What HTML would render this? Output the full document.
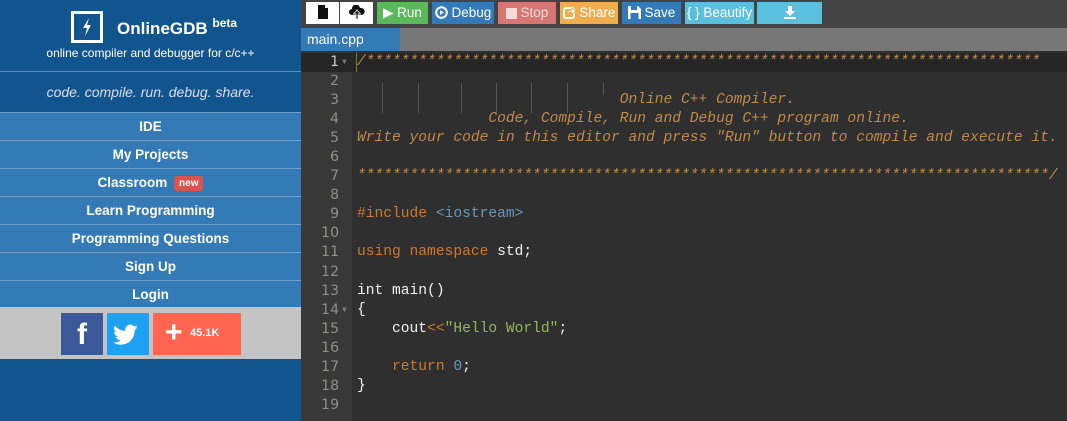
<!DOCTYPE html>
<html><head><meta charset="utf-8"><style>
*{margin:0;padding:0;box-sizing:border-box}
body{width:1067px;height:421px;overflow:hidden;background:#2f2f2f;font-family:"Liberation Sans",sans-serif;position:relative}
#side{position:absolute;left:0;top:0;width:301px;height:421px;background:#12558e}
.logo{position:absolute;left:71px;top:11px;width:32px;height:32px;border:3px solid #fff}
.title{position:absolute;left:117px;top:16px;color:#fff;font-weight:bold;font-size:17px}
.title sup{font-size:12px;vertical-align:7px}
.sub{position:absolute;left:0;width:301px;top:46px;text-align:center;color:#fff;font-size:12px}
.hr{position:absolute;left:0;top:71px;width:301px;height:1px;background:#5b8ab5}
.motto{position:absolute;left:0;width:301px;top:84px;text-align:center;color:#dde;font-size:14px;font-style:italic}
.menu{position:absolute;left:0;top:112px;width:301px}
.menu div{height:28px;line-height:27px;background:#337ab7;color:#fff;text-align:center;font-weight:bold;font-size:13.5px;border-top:1px solid #6a9bc9}
.new{display:inline-block;background:#d9534f;color:#fff;font-size:10px;border-radius:3px;padding:0 5px;line-height:15px;vertical-align:1px;margin-left:3px}
.social{position:absolute;left:0;top:307px;width:301px;height:52px;background:#c4c4c4}
.sb{position:absolute;top:6px;height:42px;color:#fff}
#tb{position:absolute;left:301px;top:0;width:766px;height:28px;background:#444}
.b{position:absolute;top:2px;height:22px;color:#fff;font-size:13.5px;line-height:22px;text-align:center;white-space:nowrap;overflow:hidden}
.b svg{vertical-align:-2px}
#tabs{position:absolute;left:301px;top:28px;width:766px;height:23px;background:#777}
#tab{position:absolute;left:0;top:0;width:99px;height:23px;background:#337ab7;color:#fff;font-size:14px;line-height:23px;padding-left:6px}
#gut{position:absolute;left:301px;top:52px;width:51px;height:369px;background:#383838}
#ed{position:absolute;left:301px;top:53px;width:766px;font-family:"Liberation Mono",monospace;font-size:14.6px}
.l{height:19.05px;line-height:19px;white-space:pre;position:relative}
.n{position:absolute;left:0;width:38px;text-align:right;color:#8f908a;font-family:"DejaVu Sans",sans-serif;font-size:14px}
.f{position:absolute;left:41px;top:0;color:#777;font-size:8px}
.c{position:absolute;left:56px;color:#f0f0f0}
.cm{color:#c08a4a;font-style:italic}
.kw{color:#cc7832}.st{color:#8fb85a}.nu{color:#6897bb}.inc{color:#6897bb}
.g{position:absolute;top:30px;height:30px;width:1px;background:#555}
</style></head><body>
<div id="side">
<div class="logo"><svg width="26" height="26" viewBox="0 0 26 26"><path d="M15 4 L9 14 H13 L11 22 L17 11 H13 Z" fill="#fff"/></svg></div>
<div class="title">OnlineGDB <sup>beta</sup></div>
<div class="sub">online compiler and debugger for c/c++</div>
<div class="hr"></div>
<div class="motto">code. compile. run. debug. share.</div>
<div class="menu">
<div>IDE</div><div>My Projects</div><div>Classroom <span class="new">new</span></div><div>Learn Programming</div><div>Programming Questions</div><div>Sign Up</div><div>Login</div>
</div>
<div class="social">
<div class="sb" style="left:61px;width:42px;background:#3b5998;font-size:30px;font-weight:bold;text-align:center;line-height:44px">f</div>
<div class="sb" style="left:107px;width:42px;background:#1da1f2"><svg width="42" height="42" viewBox="0 0 42 42"><path d="M31 14c-1 .4-2 .7-3 .8 1-.6 2-1.6 2.3-2.7-1 .6-2 1-3.3 1.2a5 5 0 0 0-8.6 4.6c-4.3-.2-8-2.2-10.6-5.3-1.5 2.5-.6 5.4 1.6 6.8-.8 0-1.6-.3-2.3-.6 0 2.4 1.7 4.5 4 5-.7.2-1.5.2-2.3.1.6 2 2.5 3.4 4.7 3.5-2 1.6-4.6 2.4-7.3 2.1 2.2 1.4 4.8 2.2 7.6 2.2 9.1 0 14.2-7.7 13.9-14.7 1-.7 1.8-1.6 2.4-2.5z" fill="#fff"/></svg></div>
<div class="sb" style="left:153px;width:88px;background:#ff6550"><span style="position:absolute;left:12px;top:4px;font-size:30px;font-weight:bold;line-height:32px">+</span><span style="position:absolute;left:37px;top:14px;font-size:11px;font-weight:bold">45.1K</span></div>
</div>
</div>
<div id="tb">
<div class="b" style="left:5px;width:33px;background:#fff"><svg width="12" height="14" viewBox="0 0 12 14"><path d="M1 0H8L11 3V14H1Z" fill="#111"/><path d="M8 0V3H11" fill="#fff"/></svg></div>
<div class="b" style="left:39px;width:33px;background:#fff"><svg width="16" height="14" viewBox="0 0 16 14"><path d="M4 10H3A3 3 0 0 1 3 4 4 4 0 0 1 11 3 3 3 0 0 1 13 10H12" fill="#111"/><path d="M8 5L4.5 9H7V14H9V9H11.5Z" fill="#111" stroke="#fff" stroke-width=".8"/></svg></div>
<div class="b" style="left:76px;width:51px;background:#5cb85c">&#9654; Run</div>
<div class="b" style="left:131px;width:62px;background:#337ab7"><svg width="13" height="13" viewBox="0 0 13 13"><circle cx="6.5" cy="6.5" r="5.3" fill="none" stroke="#fff" stroke-width="2"/><path d="M5 4V9L9 6.5Z" fill="#fff"/></svg> Debug</div>
<div class="b" style="left:197px;width:58px;background:#d67773;color:#f5dcdb"><svg width="11" height="11"><rect width="11" height="11" fill="#f5dcdb"/></svg> Stop</div>
<div class="b" style="left:259px;width:58px;background:#f0ad4e"><svg width="13" height="13" viewBox="0 0 13 13"><rect x="1" y="2" width="10" height="10" rx="2" fill="none" stroke="#fff" stroke-width="2"/><path d="M4 9C4 5 7 4 9 4V2L13 5 9 8V6C7 6 5 7 4 9Z" fill="#fff" stroke="#f0ad4e" stroke-width=".8"/></svg> Share</div>
<div class="b" style="left:321px;width:59px;background:#337ab7"><svg width="13" height="13" viewBox="0 0 13 13"><path d="M0 0H10L13 3V13H0Z" fill="#fff"/><rect x="3" y="0" width="6" height="4" fill="#337ab7"/><rect x="2.5" y="7" width="8" height="6" fill="#337ab7"/></svg> Save</div>
<div class="b" style="left:384px;width:69px;background:#5bc0de">{ } Beautify</div>
<div class="b" style="left:456px;width:65px;background:#5bc0de"><svg width="12" height="13" viewBox="0 0 12 13"><path d="M4 0H8V5H11L6 10 1 5H4Z" fill="#fff"/><rect y="11" width="12" height="2" fill="#fff"/></svg></div>
</div>
<div id="tabs"><div id="tab">main.cpp</div></div>
<div id="gut"></div>
<div id="ed">
<div class="g" style="left:81px"></div><div class="g" style="left:117px"></div><div class="g" style="left:160px"></div><div class="g" style="left:195px"></div><div class="g" style="left:230px"></div><div class="g" style="left:266px"></div><div class="g" style="left:302px;height:12px"></div>
<div class="l" style="background:#262626"><span class="n" style="color:#ccc">1</span><span class="f">&#9660;</span><span class="c cm" style="left:55px;border-left:1px solid #6a8a3a">/*****************************************************************************</span></div>
<div class="l"><span class="n">2</span></div>
<div class="l"><span class="n">3</span><span class="c cm">                              Online C++ Compiler.</span></div>
<div class="l"><span class="n">4</span><span class="c cm">               Code, Compile, Run and Debug C++ program online.</span></div>
<div class="l"><span class="n">5</span><span class="c cm">Write your code in this editor and press "Run" button to compile and execute it.</span></div>
<div class="l"><span class="n">6</span></div>
<div class="l"><span class="n">7</span><span class="c cm">*******************************************************************************/</span></div>
<div class="l"><span class="n">8</span></div>
<div class="l"><span class="n">9</span><span class="c"><span class="kw">#include</span> <span class="inc">&lt;iostream&gt;</span></span></div>
<div class="l"><span class="n">10</span></div>
<div class="l"><span class="n">11</span><span class="c"><span class="kw">using namespace</span> std;</span></div>
<div class="l"><span class="n">12</span></div>
<div class="l"><span class="n">13</span><span class="c">int main()</span></div>
<div class="l"><span class="n">14</span><span class="f">&#9660;</span><span class="c">{</span></div>
<div class="l"><span class="n">15</span><span class="c">    cout<span class="kw">&lt;&lt;</span><span class="st">"Hello World"</span>;</span></div>
<div class="l"><span class="n">16</span></div>
<div class="l"><span class="n">17</span><span class="c">    <span class="kw">return</span> <span class="nu">0</span>;</span></div>
<div class="l"><span class="n">18</span><span class="c">}</span></div>
<div class="l"><span class="n">19</span></div>
</div>
</body></html>
